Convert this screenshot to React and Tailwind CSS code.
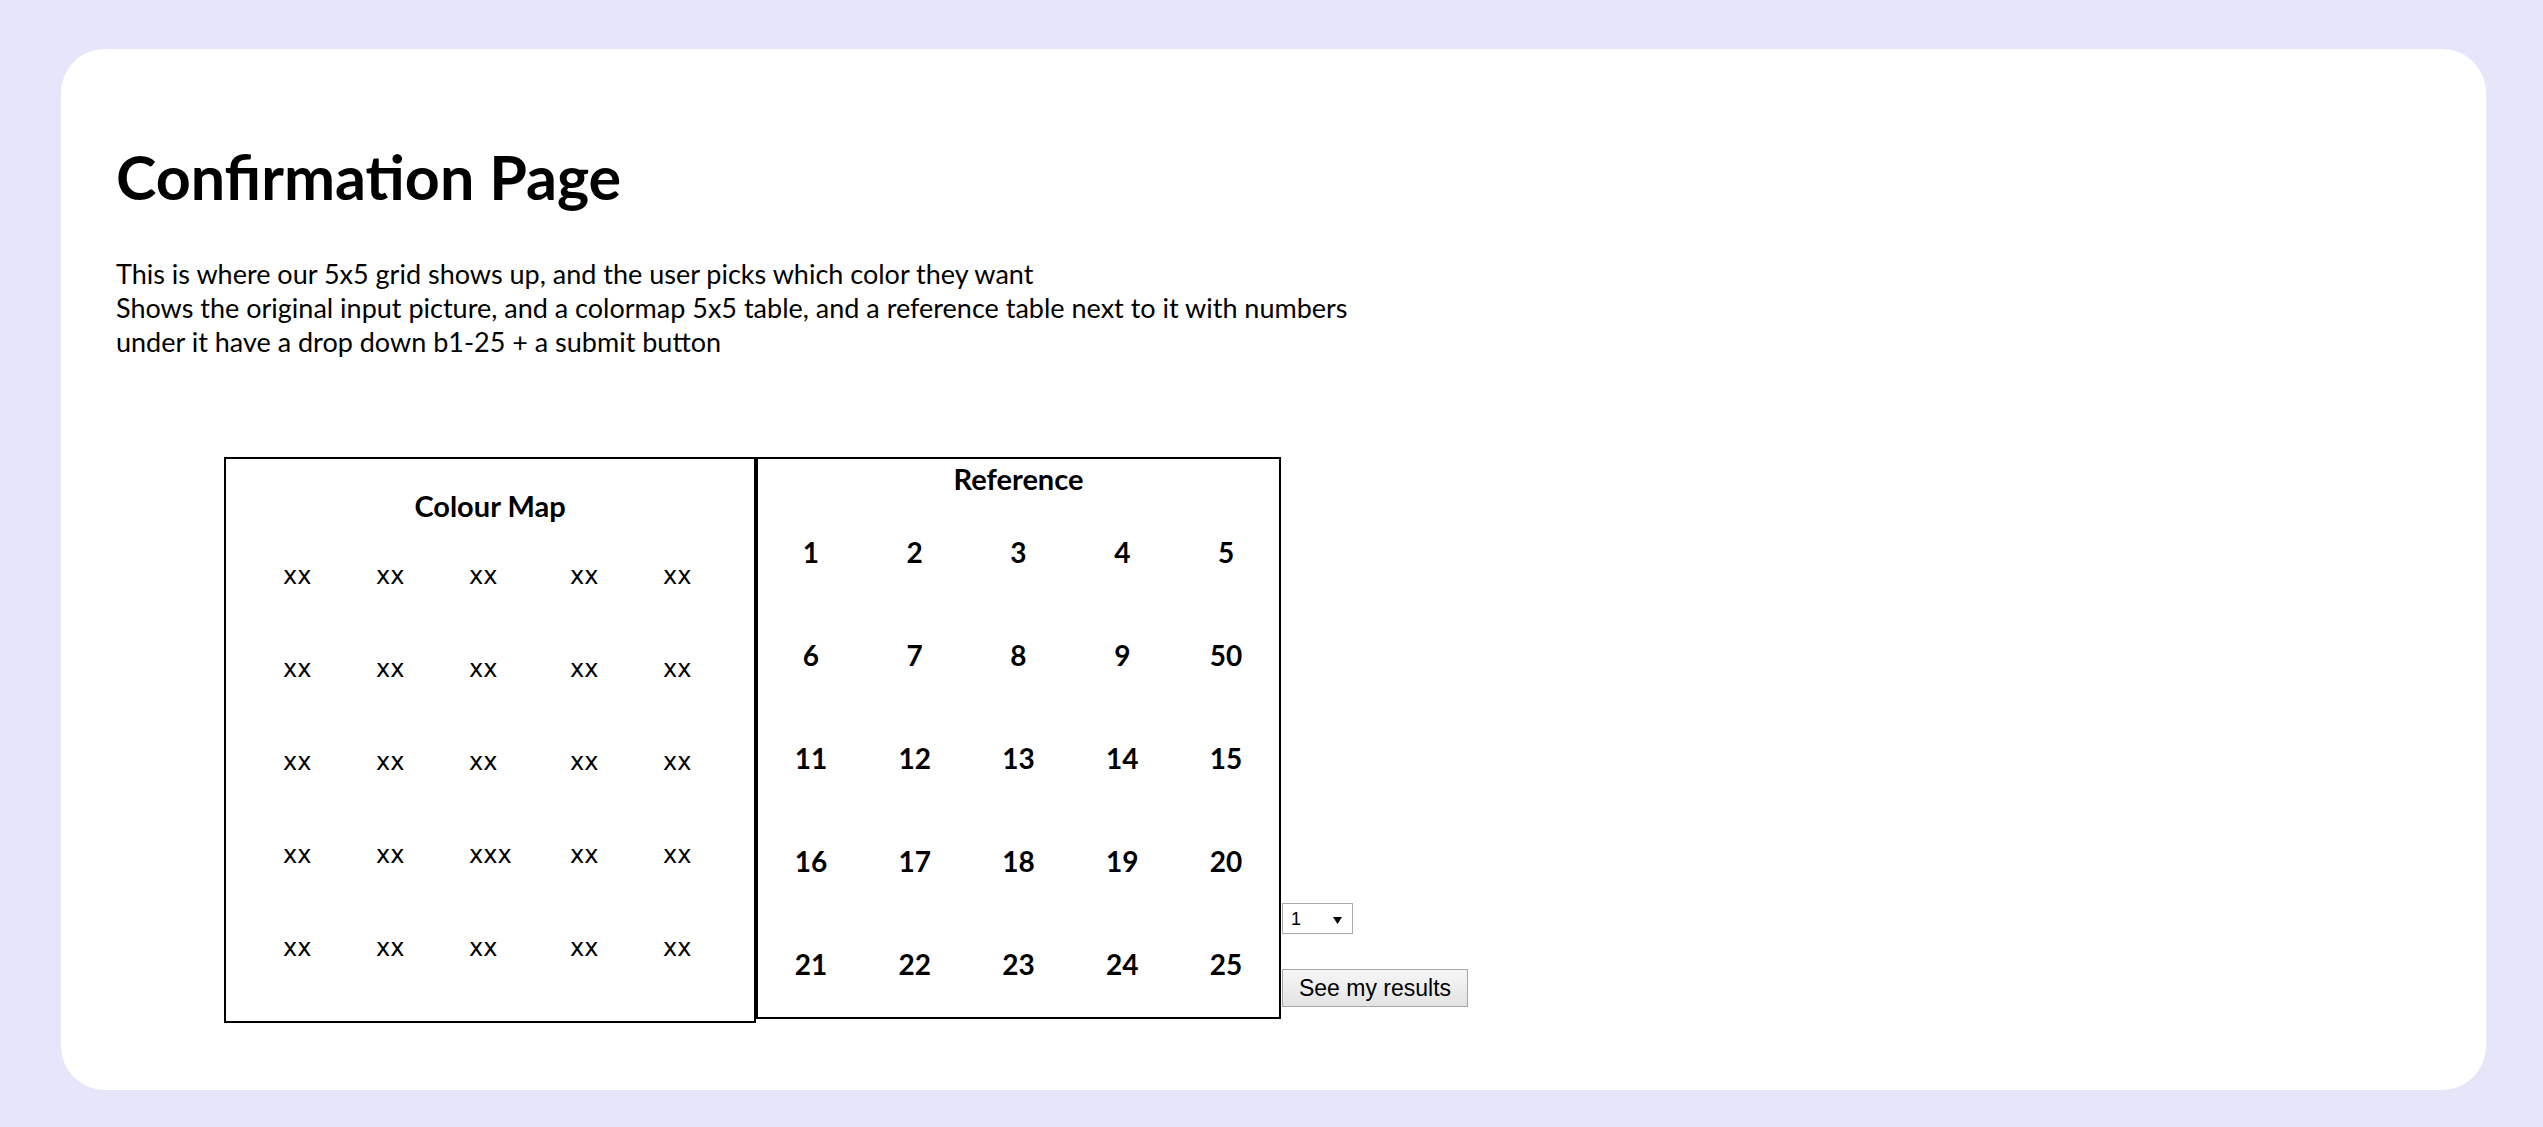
import { useState } from 'react';

const colourMap = [
  ['xx', 'xx', 'xx', 'xx', 'xx'],
  ['xx', 'xx', 'xx', 'xx', 'xx'],
  ['xx', 'xx', 'xx', 'xx', 'xx'],
  ['xx', 'xx', 'xxx', 'xx', 'xx'],
  ['xx', 'xx', 'xx', 'xx', 'xx'],
];

const reference = [
  [1, 2, 3, 4, 5],
  [6, 7, 8, 9, 50],
  [11, 12, 13, 14, 15],
  [16, 17, 18, 19, 20],
  [21, 22, 23, 24, 25],
];

const options = Array.from({ length: 25 }, (_, i) => i + 1);

const App = () => {
  const [choice, setChoice] = useState('1');

  return (
    <div className="min-h-screen bg-[#e6e6fa] pt-[49px] pl-[61px] pr-[57px] font-['Lato',sans-serif] text-black">
      <div className="h-[1041px] rounded-[44px] bg-white pl-[55px] pt-[91px]">
        <h1 className="text-[61px] font-bold leading-[1.2]">Confirmation Page</h1>
        <p className="mt-[44px] text-[27px] leading-[34px]">
          This is where our 5x5 grid shows up, and the user picks which color they want
          <br />
          Shows the original input picture, and a colormap 5x5 table, and a reference table next to it with numbers
          <br />
          under it have a drop down b1-25 + a submit button
        </p>

        <div className="mt-[98px] ml-[108px] flex items-start">
          {/* colour map */}
          <div className="w-[532px] h-[566px] border-2 border-black pt-[32px]">
            <h2 className="text-center text-[29px] font-bold leading-none">Colour Map</h2>
            <div className="mt-[10px] pl-[57px] grid grid-cols-[93px_93px_101px_93px_1fr] font-['DejaVu_Sans',sans-serif] text-[24px] leading-[93px]">
              {colourMap.flat().map((c, i) => (
                <span key={i}>{c}</span>
              ))}
            </div>
          </div>

          {/* reference */}
          <div className="w-[525px] h-[562px] border-2 border-black pt-[5px] px-px">
            <h2 className="text-center text-[29px] font-bold leading-none">Reference</h2>
            <div className="mt-[8px] grid grid-cols-5 text-center text-[28px] font-bold leading-[103px]">
              {reference.flat().map((n) => (
                <span key={n}>{n}</span>
              ))}
            </div>
          </div>

          <form onSubmit={(e) => e.preventDefault()} className="ml-px mt-[446px] flex flex-col items-start gap-[35px] font-['Liberation_Sans',Arial,sans-serif]">
            <div className="relative w-[71px] h-[31px] border border-[#a9a9a9] bg-white">
              <select value={choice} onChange={(e) => setChoice(e.target.value)}
                className="w-full h-full appearance-none bg-transparent pl-[8px] text-[18px] leading-none text-black outline-none">
                {options.map((o) => <option key={o} value={o}>{o}</option>)}
              </select>
              <svg className="pointer-events-none absolute left-[50px] top-[13px]" width="9" height="7" viewBox="0 0 9 7">
                <path d="M0 0H9L4.5 7Z" fill="#000" />
              </svg>
            </div>
            <button type="submit" className="w-[186px] h-[38px] border border-[#a6a6a6] bg-gradient-to-b from-[#f6f6f6] to-[#e3e3e3] text-[23px] leading-none text-black">
              See my results
            </button>
          </form>
        </div>
      </div>
    </div>
  );
};

export default App;
